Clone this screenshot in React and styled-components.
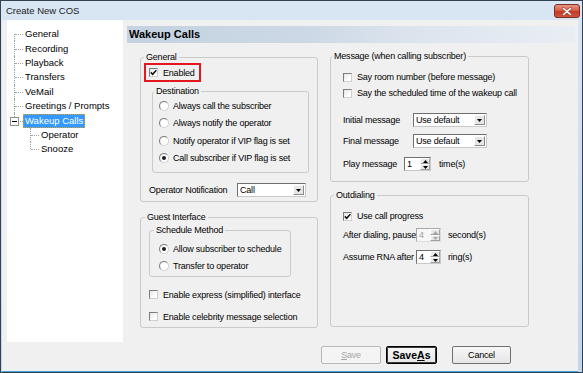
import React from 'react';
import styled, { createGlobalStyle } from 'styled-components';

const GlobalStyle = createGlobalStyle`
  html, body {
    margin: 0;
    padding: 0;
    background: #ffffff;
  }
  * {
    box-sizing: border-box;
  }
`;

const treeItems = [
  { label: 'General', level: 0, first: true },
  { label: 'Recording', level: 0 },
  { label: 'Playback', level: 0 },
  { label: 'Transfers', level: 0 },
  { label: 'VeMail', level: 0 },
  { label: 'Greetings / Prompts', level: 0 },
  { label: 'Wakeup Calls', level: 0, last: true, expanded: true, selected: true },
  { label: 'Operator', level: 1 },
  { label: 'Snooze', level: 1, last: true },
];

const destinations = [
  { label: 'Always call the subscriber' },
  { label: 'Always notify the operator' },
  { label: 'Notify operator if VIP flag is set' },
  { label: 'Call subscriber if VIP flag is set', on: true },
];

const Tick = () => (
  <svg width="7" height="7" viewBox="0 0 7 7">
    <path d="M0.8 3.4 L2.7 5.3 L6.3 1.2" fill="none" stroke="#111" strokeWidth="1.5" />
  </svg>
);

const ArrowDown = ({ color = '#000' }) => (
  <svg width="5" height="3" viewBox="0 0 5 3">
    <path d="M0 0 H5 L2.5 3 Z" fill={color} />
  </svg>
);

const ArrowUp = ({ color = '#000' }) => (
  <svg width="5" height="3" viewBox="0 0 5 3">
    <path d="M0 3 H5 L2.5 0 Z" fill={color} />
  </svg>
);

const Check = ({ checked, mt, h = 16, children }) => (
  <CheckRow $mt={mt} $h={h}>
    <CheckBox>{checked && <Tick />}</CheckBox>
    <span>{children}</span>
  </CheckRow>
);

const Radio = ({ on, children }) => (
  <RadioRow>
    <RadioDot $on={on} />
    <span>{children}</span>
  </RadioRow>
);

const Dropdown = ({ value, w }) => (
  <Select $w={w}>
    <span>{value}</span>
    <SelectArrow>
      <ArrowDown />
    </SelectArrow>
  </Select>
);

const Spinner = ({ value, w, disabled }) => {
  const c = disabled ? '#a8a8a8' : '#000';
  return (
    <Spin $w={w} $disabled={disabled}>
      <SpinValue>{value}</SpinValue>
      <SpinButtons>
        <SpinHalf>
          <ArrowUp color={c} />
        </SpinHalf>
        <SpinHalf>
          <ArrowDown color={c} />
        </SpinHalf>
      </SpinButtons>
    </Spin>
  );
};

const App = () => {
  return (
    <>
      <GlobalStyle />
      <Window>
        <TitleBar>
          <Title>Create New COS</Title>
          <CloseButton>
            <svg width="12" height="9" viewBox="0 0 12 9">
              <path d="M2.5 1.5 L9.5 7.5 M9.5 1.5 L2.5 7.5" stroke="#9c4a3e" strokeWidth="2.8" strokeLinecap="round" />
              <path d="M2.5 1.5 L9.5 7.5 M9.5 1.5 L2.5 7.5" stroke="#ffffff" strokeWidth="1.6" strokeLinecap="round" />
            </svg>
          </CloseButton>
        </TitleBar>

        <Client>
          <Body>
            <Tree>
              {treeItems.map((item) => (
                <TreeRow key={item.label}>
                  {item.level > 0 && <Indent />}
                  <Connector $first={item.first} $last={item.last}>
                    {item.expanded && <Expander />}
                  </Connector>
                  <TreeLabel $selected={item.selected}>{item.label}</TreeLabel>
                </TreeRow>
              ))}
            </Tree>

            <Panel>
              <PanelHeader>Wakeup Calls</PanelHeader>

              <Columns>
                <Column $w={178}>
                  <Group $mt={6} $h={145} $pl={3}>
                    <Caption $cx={0}>General</Caption>
                    <Highlight>
                      <Check checked h={15}>Enabled</Check>
                    </Highlight>

                    <Group $mt={9} $ml={8} $w={157} $h={82} $pl={6}>
                      <Caption $cx={-5}>Destination</Caption>
                      {destinations.map((d) => (
                        <Radio key={d.label} on={d.on}>{d.label}</Radio>
                      ))}
                    </Group>

                    <FieldRow $mt={10} $ml={5}>
                      <FieldLabel $w={88}>Operator Notification</FieldLabel>
                      <Dropdown value="Call" w={69} />
                    </FieldRow>
                  </Group>

                  <Group $mt={15} $h={111} $pl={8}>
                    <Caption $cx={-4}>Guest Interface</Caption>
                    <Group $mt={7} $w={142} $h={47} $pl={9}>
                      <Caption $cx={-5}>Schedule Method</Caption>
                      <Stack $mt={4}>
                        <Radio on>Allow subscriber to schedule</Radio>
                        <Radio>Transfer to operator</Radio>
                      </Stack>
                    </Group>
                    <Check mt={9} h={17}>Enable express (simplified) interface</Check>
                    <Check mt={5} h={17}>Enable celebrity message selection</Check>
                  </Group>
                </Column>

                <Column $w={199}>
                  <Group $mt={5} $h={126} $pl={12}>
                    <Caption $cx={-11}>Message (when calling subscriber)</Caption>
                    <Check mt={7}>Say room number (before message)</Check>
                    <Check>Say the scheduled time of the wakeup call</Check>

                    <FieldRow $mt={12}>
                      <FieldLabel $w={70}>Initial message</FieldLabel>
                      <Dropdown value="Use default" w={74} />
                    </FieldRow>
                    <FieldRow $mt={7}>
                      <FieldLabel $w={70}>Final message</FieldLabel>
                      <Dropdown value="Use default" w={74} />
                    </FieldRow>
                    <FieldRow $mt={9}>
                      <FieldLabel $w={61}>Play message</FieldLabel>
                      <Spinner value="1" w={27} />
                      <Unit>time(s)</Unit>
                    </FieldRow>
                  </Group>

                  <Group $mt={13} $h={132} $pl={12}>
                    <Caption $cx={-9}>Outdialing</Caption>
                    <Check checked mt={7}>Use call progress</Check>
                    <FieldRow $mt={4}>
                      <FieldLabel $w={73}>After dialing, pause</FieldLabel>
                      <Spinner value="4" w={25} disabled />
                      <Unit $gap={7}>second(s)</Unit>
                    </FieldRow>
                    <FieldRow $mt={8}>
                      <FieldLabel $w={73}>Assume RNA after</FieldLabel>
                      <Spinner value="4" w={25} />
                      <Unit $gap={7}>ring(s)</Unit>
                    </FieldRow>
                  </Group>
                </Column>
              </Columns>
            </Panel>
          </Body>

          <Footer>
            <Button $w={60} disabled>
              <u>S</u>ave
            </Button>
            <Button $w={51} $ml={5} $default>
              Save<u>A</u>s
            </Button>
            <Button $w={59} $ml={15}>
              Cancel
            </Button>
          </Footer>
        </Client>
      </Window>
    </>
  );
};

const Window = styled.div`
  width: 583px;
  height: 373px;
  border: 1px solid #34414f;
  background: linear-gradient(#d9e6f4, #c2d6ec);
  display: flex;
  flex-direction: column;
  font-family: "Liberation Sans", Arial, sans-serif;
  color: #000;
`;

const TitleBar = styled.div`
  height: 19px;
  display: flex;
  align-items: flex-start;
  padding: 0 2px 0 5px;
`;

const Title = styled.span`
  font-size: 9.5px;
  line-height: 20px;
  color: #1b1b1b;
`;

const CloseButton = styled.div`
  margin-left: auto;
  margin-top: 3px;
  width: 26px;
  height: 14px;
  flex: none;
  border: 1px solid #7e2f24;
  border-radius: 3px;
  background-color: #c94a36;
  background-image: linear-gradient(#e99585, #d65e4a 45%, #c23a25 55%, #d0533c);
  display: flex;
  align-items: center;
  justify-content: center;
`;

const Client = styled.div`
  flex: 1;
  margin: 0 4px 0 1px;
  background: #f0f0f0;
  border-bottom: 1px solid #3aa2dc;
  font-size: 9px;
  letter-spacing: -0.2px;
  display: flex;
  flex-direction: column;
`;

const Body = styled.div`
  display: flex;
  gap: 4px;
  padding-left: 5px;
  height: 322px;
`;

const Tree = styled.div`
  width: 116px;
  height: 322px;
  background: #ffffff;
  padding-top: 7px;
  font-size: 9.5px;
  letter-spacing: 0;
`;

const TreeRow = styled.div`
  display: flex;
  align-items: center;
  height: 14.4px;
`;

const Indent = styled.span`
  width: 16px;
  height: 100%;
`;

const Connector = styled.span`
  position: relative;
  width: 16px;
  height: 100%;

  &::before {
    content: '';
    position: absolute;
    left: 7px;
    top: ${(p) => (p.$first ? '50%' : '0')};
    bottom: ${(p) => (p.$last ? '50%' : '0')};
    border-left: 1px dotted #a0a0a0;
  }

  &::after {
    content: '';
    position: absolute;
    left: 8px;
    right: 0;
    top: 50%;
    border-top: 1px dotted #a0a0a0;
  }
`;

const Expander = styled.span`
  position: absolute;
  z-index: 1;
  left: 3px;
  top: 50%;
  width: 9px;
  height: 9px;
  margin-top: -4px;
  border: 1px solid #919191;
  background: #ffffff;

  &::after {
    content: '';
    position: absolute;
    left: 1px;
    right: 1px;
    top: 3px;
    border-top: 1px solid #000;
  }
`;

const TreeLabel = styled.span`
  height: 14px;
  line-height: 12px;
  padding: 0 1px;
  border: 1px ${(p) => (p.$selected ? 'dotted #e0a030' : 'solid transparent')};
  background: ${(p) => (p.$selected ? '#3399ff' : 'transparent')};
  color: ${(p) => (p.$selected ? '#ffffff' : '#000000')};
  white-space: nowrap;
`;

const Panel = styled.div`
  flex: 1;
  padding: 6px 3px 0 0;
`;

const PanelHeader = styled.div`
  height: 17px;
  line-height: 17px;
  padding-left: 2px;
  font-size: 11px;
  font-weight: bold;
  letter-spacing: 0;
  background: linear-gradient(to right, #c4d2e1, #ccd8e5 40%, #dbe3ed 62%, #e9eef4);
`;

const Columns = styled.div`
  display: flex;
  gap: 12px;
  padding-left: 13px;
  margin-top: 8px;
`;

const Column = styled.div`
  width: ${(p) => p.$w}px;
  display: flex;
  flex-direction: column;
`;

const Group = styled.div`
  margin-top: ${(p) => p.$mt || 0}px;
  margin-left: ${(p) => p.$ml || 0}px;
  width: ${(p) => (p.$w ? `${p.$w}px` : 'auto')};
  height: ${(p) => p.$h}px;
  border: 1px solid #cacaca;
  border-radius: 3px;
  padding-left: ${(p) => p.$pl}px;
  display: flex;
  flex-direction: column;
  align-items: flex-start;
`;

const Caption = styled.div`
  margin: -6px 0 0 ${(p) => p.$cx}px;
  padding: 0 2px;
  height: 11px;
  line-height: 11px;
  background: #f0f0f0;
  white-space: nowrap;
`;

const Stack = styled.div`
  margin-top: ${(p) => p.$mt || 0}px;
  display: flex;
  flex-direction: column;
`;

const Highlight = styled.div`
  display: flex;
  align-items: center;
  height: 19px;
  padding: 0 4px 0 3px;
  border: 2px solid #e5161d;
`;

const CheckRow = styled.div`
  display: flex;
  align-items: center;
  gap: 5px;
  height: ${(p) => p.$h}px;
  margin-top: ${(p) => p.$mt || 0}px;
  white-space: nowrap;
`;

const CheckBox = styled.span`
  width: 9px;
  height: 9px;
  flex: none;
  border: 1px solid;
  border-color: #7c7c7c #cfcfcf #cfcfcf #7c7c7c;
  background: linear-gradient(135deg, #e4e4e4, #ffffff 70%);
  display: flex;
  align-items: center;
  justify-content: center;
`;

const RadioRow = styled.div`
  display: flex;
  align-items: center;
  gap: 4px;
  height: 17.5px;
  white-space: nowrap;
`;

const RadioDot = styled.span`
  width: 10px;
  height: 10px;
  flex: none;
  border-radius: 50%;
  border: 1px solid;
  border-color: #7d7d7d #d2d2d2 #d2d2d2 #7d7d7d;
  background: radial-gradient(circle at 60% 60%, #ffffff 45%, #e2e2e2);
  display: flex;
  align-items: center;
  justify-content: center;

  &::after {
    content: '';
    width: 4px;
    height: 4px;
    border-radius: 50%;
    background: ${(p) => (p.$on ? '#1f1f1f' : 'transparent')};
  }
`;

const FieldRow = styled.div`
  display: flex;
  align-items: center;
  height: 14px;
  margin-top: ${(p) => p.$mt || 0}px;
  margin-left: ${(p) => p.$ml || 0}px;
  white-space: nowrap;
`;

const FieldLabel = styled.span`
  width: ${(p) => p.$w}px;
  flex: none;
`;

const Unit = styled.span`
  margin-left: ${(p) => p.$gap || 8}px;
`;

const Select = styled.div`
  width: ${(p) => p.$w}px;
  height: 14px;
  display: flex;
  align-items: center;
  padding-left: 2px;
  border: 1px solid;
  border-color: #6f6f6f #c9c9c9 #c9c9c9 #6f6f6f;
  background: #ffffff;
`;

const SelectArrow = styled.span`
  margin: 0 1px 0 auto;
  width: 11px;
  height: 10px;
  border: 1px solid;
  border-color: #ffffff #8a8a8a #8a8a8a #ffffff;
  background: #e6e6e6;
  display: flex;
  align-items: center;
  justify-content: center;
`;

const Spin = styled.div`
  width: ${(p) => p.$w}px;
  height: 14px;
  display: flex;
  border: 1px solid;
  border-color: ${(p) => (p.$disabled ? '#a9a9a9 #dcdcdc #dcdcdc #a9a9a9' : '#6f6f6f #c9c9c9 #c9c9c9 #6f6f6f')};
  background: ${(p) => (p.$disabled ? '#f7f7f7' : '#ffffff')};
  color: ${(p) => (p.$disabled ? '#9c9c9c' : '#000000')};
`;

const SpinValue = styled.span`
  flex: 1;
  padding-left: 2px;
  line-height: 12px;
`;

const SpinButtons = styled.div`
  width: 10px;
  display: flex;
  flex-direction: column;
`;

const SpinHalf = styled.span`
  flex: 1;
  border: 1px solid;
  border-color: #ffffff #a0a0a0 #a0a0a0 #ffffff;
  background: #e8e8e8;
  display: flex;
  align-items: center;
  justify-content: center;
`;

const Footer = styled.div`
  display: flex;
  justify-content: flex-end;
  padding-right: 67px;
  margin-top: 4px;
`;

const Button = styled.button`
  width: ${(p) => p.$w}px;
  height: 18px;
  margin-left: ${(p) => p.$ml || 0}px;
  padding: 0;
  font-family: "Liberation Sans", Arial, sans-serif;
  font-size: ${(p) => (p.$default ? '10.5px' : '9px')};
  font-weight: ${(p) => (p.$default ? 'bold' : 'normal')};
  letter-spacing: ${(p) => (p.$default ? '0' : '-0.2px')};
  color: #000000;
  background: linear-gradient(#f7f7f7, #e6e6e6);
  border: 1px solid #707070;
  border-radius: 2px;
  box-shadow: ${(p) => (p.$default ? 'inset 0 0 0 1px #3a3a3a' : 'none')};
  border-color: ${(p) => (p.$default ? '#000000' : '#707070')};

  &:disabled {
    color: #a6a6a6;
    border-color: #b8b8b8;
    background: #f4f4f4;
  }
`;

export default App;
